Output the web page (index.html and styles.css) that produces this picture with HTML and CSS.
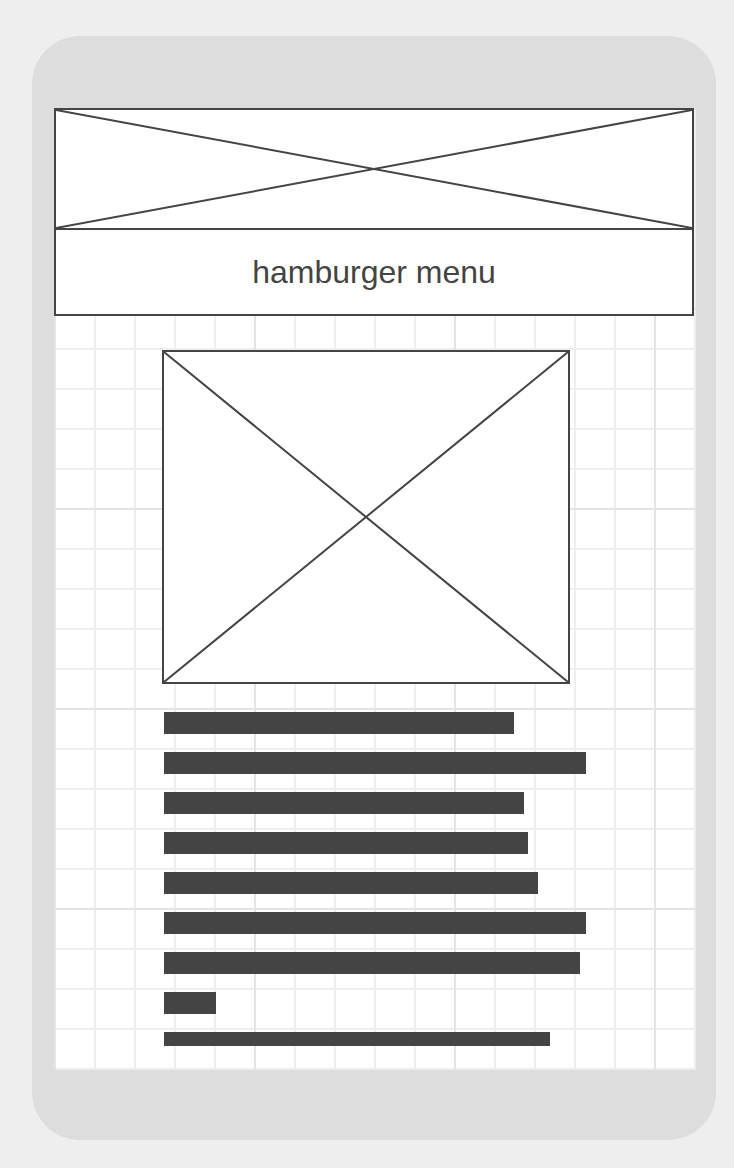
FILE: index.html
```html
<!DOCTYPE html>
<html>
<head>
<meta charset="utf-8">
<link rel="stylesheet" href="styles.css">
</head>
<body>
<div class="phone">
  <div class="screen">
    <div class="header">
      <div class="banner">
        <svg class="xsvg" viewBox="0 0 100 100" preserveAspectRatio="none">
          <line x1="0" y1="0" x2="100" y2="100" vector-effect="non-scaling-stroke"/>
          <line x1="100" y1="0" x2="0" y2="100" vector-effect="non-scaling-stroke"/>
        </svg>
      </div>
      <div class="menu">hamburger menu</div>
    </div>
    <div class="hero">
      <svg class="xsvg" viewBox="0 0 100 100" preserveAspectRatio="none">
        <line x1="0" y1="0" x2="100" y2="100" vector-effect="non-scaling-stroke"/>
        <line x1="100" y1="0" x2="0" y2="100" vector-effect="non-scaling-stroke"/>
      </svg>
    </div>
    <div class="lines">
      <div class="bar" style="width:350px"></div>
      <div class="bar" style="width:422px"></div>
      <div class="bar" style="width:360px"></div>
      <div class="bar" style="width:364px"></div>
      <div class="bar" style="width:374px"></div>
      <div class="bar" style="width:422px"></div>
      <div class="bar" style="width:416px"></div>
      <div class="bar" style="width:52px"></div>
      <div class="bar bar-thin" style="width:386px"></div>
    </div>
  </div>
</div>
</body>
</html>
```

FILE: styles.css
```css
html, body {
  margin: 0;
  padding: 0;
  background: #eeeeee;
}

body {
  padding: 36px 0 0 32px;
  font-family: "Liberation Sans", Arial, sans-serif;
}

.phone {
  box-sizing: border-box;
  width: 684px;
  height: 1104px;
  background: #dddddd;
  border-radius: 48px;
  padding: 72px 20px 70px 22px;
}

.screen {
  width: 642px;
  height: 962px;
  background-color: #ffffff;
  background-image:
    linear-gradient(to right, #e4e4e4 0, #e4e4e4 2px, transparent 2px),
    linear-gradient(to bottom, #e4e4e4 0, #e4e4e4 2px, transparent 2px),
    linear-gradient(to right, #eeeeee 0, #eeeeee 2px, transparent 2px),
    linear-gradient(to bottom, #eeeeee 0, #eeeeee 2px, transparent 2px);
  background-size: 200px 200px, 200px 200px, 40px 40px, 40px 40px;
  overflow: hidden;
}

.header {
  box-sizing: border-box;
  width: 640px;
  height: 208px;
  border: 2px solid #444444;
  background: #ffffff;
  display: flex;
  flex-direction: column;
}

.banner {
  height: 118px;
  border-bottom: 2px solid #444444;
  position: relative;
}

.xsvg {
  display: block;
  width: 100%;
  height: 100%;
}

.xsvg line {
  stroke: #444444;
  stroke-width: 2;
}

.menu {
  height: 84px;
  line-height: 84px;
  text-align: center;
  font-size: 32px;
  color: #444444;
}

.hero {
  box-sizing: border-box;
  width: 408px;
  height: 334px;
  margin: 34px 0 0 108px;
  border: 2px solid #444444;
  background: #ffffff;
}

.lines {
  margin: 28px 0 0 110px;
  display: flex;
  flex-direction: column;
  gap: 18px;
}

.bar {
  height: 22px;
  background: #444444;
}

.bar-thin {
  height: 14px;
}
```
